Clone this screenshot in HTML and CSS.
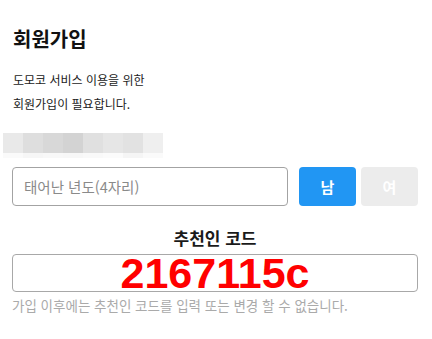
FILE: index.html
```html
<!DOCTYPE html>
<html lang="ko">

<head>
  <meta charset="utf-8" />
  <title>회원가입</title>
  <link rel="stylesheet" href="styles.css">
</head>

<body>
  <div class="signup">
    <h1 class="signup-title">회원가입</h1>
    <p class="signup-desc">도모코 서비스 이용을 위한<br>회원가입이 필요합니다.</p>

    <div class="blur">
      <div class="blur-row">
        <span style="background:#e9e9e9"></span>
        <span style="background:#dedede"></span>
        <span style="background:#d8d8d8"></span>
        <span style="background:#d3d3d3"></span>
        <span style="background:#e0e0e0"></span>
        <span style="background:#e6e6e6"></span>
        <span style="background:#e2e2e2"></span>
        <span style="background:#efefef"></span>
      </div>
      <div class="blur-row blur-row-thin">
        <span style="background:#fafafa"></span>
        <span style="background:#f6f6f6"></span>
        <span style="background:#f8f8f8"></span>
        <span style="background:#f7f7f7"></span>
        <span style="background:#f9f9f9"></span>
        <span style="background:#fbfbfb"></span>
        <span style="background:#f5f5f5"></span>
        <span style="background:#fafafa"></span>
      </div>
    </div>

    <div class="birth">
      <input class="birth-input" type="text" placeholder="태어난 년도(4자리)" />
      <button class="gender gender-on">남</button>
      <button class="gender gender-off">여</button>
    </div>

    <div class="code-title">추천인 코드</div>
    <div class="code-box">2167115c</div>
    <p class="code-note">가입 이후에는 추천인 코드를 입력 또는 변경 할 수 없습니다.</p>
  </div>
</body>

</html>
```

FILE: styles.css
```css
body {
  margin: 0;
  background: #fff;
  font-family: "Noto Sans CJK KR", "Noto Sans", sans-serif;
  color: #222;
}

.signup {
  padding: 25px 14px 0 12px;
}

.signup-title {
  margin: 0 0 0 1px;
  font-size: 20px;
  line-height: 28px;
  font-weight: 700;
  color: #111;
}

.signup-desc {
  margin: 15px 0 0 1px;
  font-size: 12px;
  line-height: 24px;
}

/* 가려진 영역 */
.blur {
  margin: 17px 0 0 -9px;
}

.blur-row {
  display: flex;
}

.blur-row span {
  width: 20px;
  height: 20px;
}

.blur-row-thin span {
  height: 5px;
}

.birth {
  display: flex;
  margin-top: 9px;
}

.birth-input {
  width: 276px;
  height: 39px;
  box-sizing: border-box;
  margin: 0 11px 0 0;
  padding: 0 11px;
  border: 1px solid #a3a3a3;
  border-radius: 4px;
  font-family: inherit;
  font-size: 14.5px;
  outline: none;
}

.birth-input::placeholder {
  color: #8a8a8a;
}

.gender {
  width: 57px;
  height: 39px;
  margin-right: 5px;
  border: 0;
  border-radius: 4px;
  font-family: inherit;
  font-size: 15px;
  font-weight: 700;
  color: #fff;
}

.gender-on {
  background: #2196f3;
}

.gender-off {
  background: #ececec;
  margin-right: 0;
}

.code-title {
  margin-top: 20px;
  text-align: center;
  font-size: 17px;
  line-height: 24px;
  font-weight: 700;
  color: #1a1a1a;
}

.code-box {
  margin-top: 4px;
  height: 38px;
  box-sizing: border-box;
  border: 1px solid #a8a8a8;
  border-radius: 4px;
  text-align: center;
  font-family: "Liberation Sans", Arial, sans-serif;
  font-size: 43px;
  line-height: 36px;
  font-weight: 700;
  color: #ff0000;
}

.code-note {
  margin: 4px 0 0;
  font-size: 13.5px;
  line-height: 18px;
  color: #aaa;
}
```
